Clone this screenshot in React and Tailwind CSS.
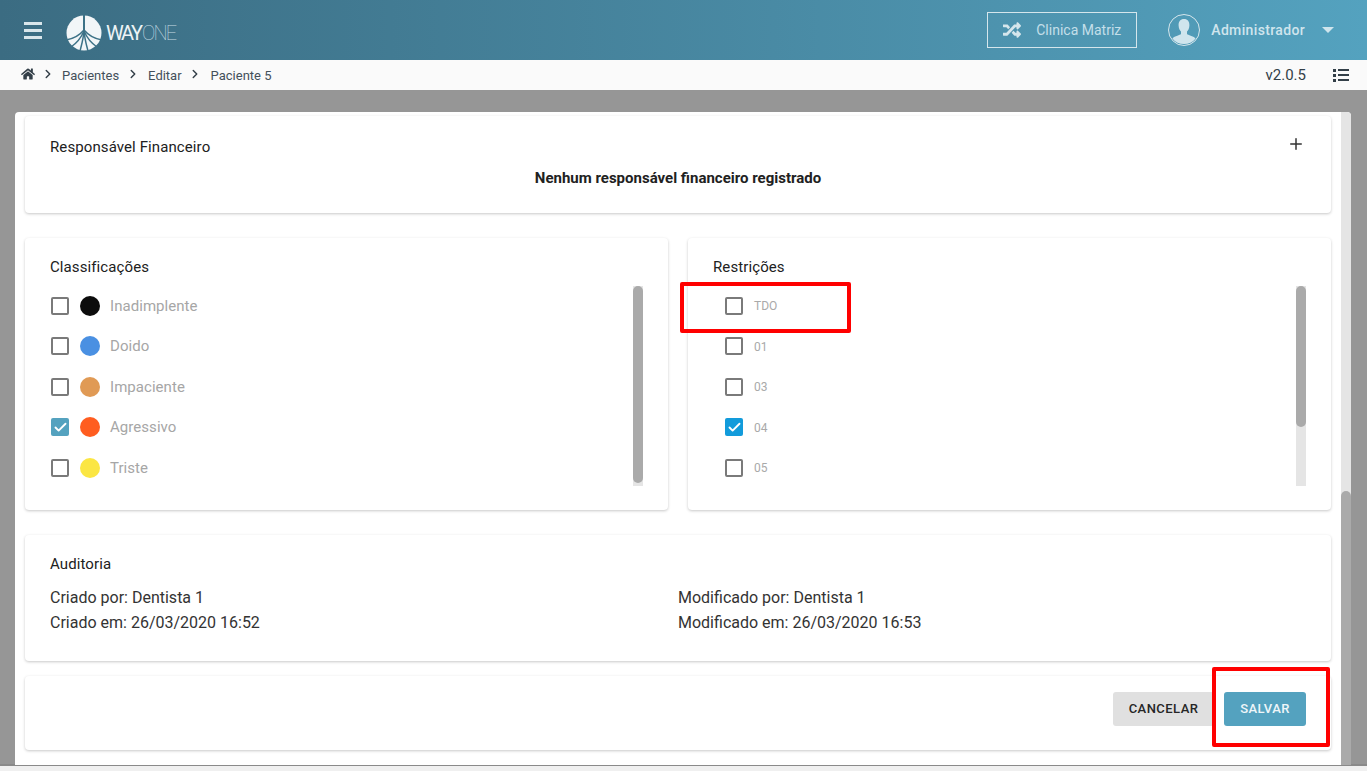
import React from "react";
import { Plus, ChevronRight, Check } from "lucide-react";
import { FaHome, FaRandom } from "react-icons/fa";

const classificacoes = [
  { label: "Inadimplente", color: "bg-[#0c0c0c]" },
  { label: "Doido", color: "bg-[#4a90e2]" },
  { label: "Impaciente", color: "bg-[#e09a55]" },
  { label: "Agressivo", color: "bg-[#ff5d20]", checked: true },
  { label: "Triste", color: "bg-[#fbe643]" },
];

const restricoes = [
  { label: "TDO" },
  { label: "01" },
  { label: "03" },
  { label: "04", checked: true },
  { label: "05" },
];

function Logo() {
  return (
    <svg width="36" height="36" viewBox="0 0 36 36">
      <circle cx="18" cy="18" r="17.5" fill="#f2f6f8" />
      <path d="M18 0V17" stroke="#3d7287" strokeWidth="2" fill="none" />
      <path d="M18 15C17.500 24 15.500 30 14 36M18 15C18.500 24 20.500 30 22 36" stroke="#3d7287" strokeWidth="1.500" fill="none" />
      <path d="M18 16C14.500 24 9.500 29 5 32M18 16C21.500 24 26.500 29 31 32" stroke="#3d7287" strokeWidth="1.500" fill="none" />
      <path d="M18 15C13 21 6 24 0 25M18 15C23 21 30 24 36 25" stroke="#3d7287" strokeWidth="1.500" fill="none" />
    </svg>
  );
}

function Checkbox({ checked, color }) {
  if (checked) {
    return (
      <span className={`flex h-[18px] w-[18px] items-center justify-center rounded-[2px] ${color}`}>
        <Check size={15} strokeWidth={3} className="text-white" />
      </span>
    );
  }
  return <span className="h-[18px] w-[18px] rounded-[2px] border-2 border-[#7a7a7a] bg-white" />;
}

function Scrollbar({ thumb }) {
  return (
    <div className="absolute right-[25px] top-[48px] h-[200px] w-[10px] bg-[#e5e5e5]">
      <div className={`w-[10px] rounded-full bg-[#aaaaaa] ${thumb}`} />
    </div>
  );
}

function Card({ className = "", children }) {
  return (
    <div className={`rounded-[4px] bg-white shadow-[0_1px_3px_rgba(0,0,0,0.22)] ${className}`}>
      {children}
    </div>
  );
}

export default function App() {
  return (
    <div className="relative flex h-[771px] w-[1367px] flex-col overflow-hidden bg-[#f0f0f0] font-['Roboto',sans-serif] text-[#212121]">
      <header className="flex h-[60px] shrink-0 items-center bg-gradient-to-r from-[#3b6c82] to-[#54a2bf]">
        <div className="ml-6 flex w-[18px] flex-col gap-[4px]">
          <span className="h-[3px] bg-[#d9e6eb]" />
          <span className="h-[3px] bg-[#d9e6eb]" />
          <span className="h-[3px] bg-[#d9e6eb]" />
        </div>
        <div className="ml-[24px] mt-[6px] flex items-center">
          <Logo />
          <span className="ml-[4px] text-[20px] font-normal tracking-[-2.2px] text-[#eef4f6]">WAY</span>
          <span className="ml-[1px] text-[20px] font-thin tracking-[-1.8px] text-[#c5dbe3]">ONE</span>
        </div>
        <div className="ml-auto flex h-[36px] w-[150px] items-center border border-[#d5e6ec] pl-[15px]">
          <FaRandom size={18} className="text-[#d5e6ec]" />
          <span className="ml-[15px] text-[14px] text-[#c4dfe9]">Clinica Matriz</span>
        </div>
        <div className="ml-[31px] flex h-[32px] w-[32px] items-center justify-center overflow-hidden rounded-full border border-[#d5e6ec]">
          <svg width="30" height="30" viewBox="0 0 30 30">
            <path d="M15 4c3.600 0 5.600 2.600 5.400 6.400-.1 2.600-1.200 5-2.400 6.200v2.400c1 1.200 6 2 8.600 4.400C23.800 27 19.600 29 15 29S6.200 27 3.400 23.400C6 21 11 20.200 12 19v-2.400c-1.200-1.200-2.300-3.600-2.400-6.200C9.400 6.600 11.400 4 15 4z" fill="#d0e5ed" />
          </svg>
        </div>
        <span className="ml-[11px] text-[14px] font-medium tracking-[0.35px] text-[#d0e5ed]">Administrador</span>
        <span className="ml-[17px] mr-[33px] h-0 w-0 border-x-[6px] border-t-[6px] border-x-transparent border-t-[#d0e5ed]" />
      </header>

      <nav className="flex h-[30px] shrink-0 items-center bg-[#fafafa] pt-[1px] text-[13px] text-[#44505a]">
        <FaHome size={14} className="ml-[21px] -mt-[4px] text-[#333f48]" />
        <ChevronRight size={14} strokeWidth={2.5} className="ml-[6px] -mt-[3px] text-[#333f48]" />
        <span className="ml-[7px]">Pacientes</span>
        <ChevronRight size={14} strokeWidth={2.5} className="ml-[7px] -mt-[3px] text-[#333f48]" />
        <span className="ml-[8px]">Editar</span>
        <ChevronRight size={14} strokeWidth={2.5} className="ml-[6px] -mt-[3px] text-[#333f48]" />
        <span className="ml-[9px]">Paciente 5</span>
        <span className="ml-auto -mt-[1px] text-[15px] text-[#333f48]">v2.0.5</span>
        <div className="ml-[27px] mr-[18px] -mt-[1px] grid w-[16px] grid-cols-[3px_1fr] gap-x-[2px] gap-y-[2px]">
          <span className="h-[3px] bg-[#333f48]" />
          <span className="h-[2px] bg-[#333f48]" />
          <span className="h-[3px] bg-[#333f48]" />
          <span className="h-[2px] bg-[#333f48]" />
          <span className="h-[3px] bg-[#333f48]" />
          <span className="h-[2px] bg-[#333f48]" />
        </div>
      </nav>

      <main className="flex h-[676px] shrink-0 border-b-2 border-[#8a8a8a] bg-[#969696] pl-[15px] pr-[16px] pt-[22px]">
        <div className="flex h-[653px] w-[1336px] overflow-hidden rounded-tl-[4px] rounded-tr-[4px] bg-white">
          <div className="w-[1326px] pl-[10px] pr-[10px]">
            <Card className="relative mt-[4px] h-[97px] px-[25px]">
              <h3 className="pt-[23px] text-[15px] leading-[16px] tracking-[0.1px]">Responsável Financeiro</h3>
              <Plus size={18} strokeWidth={2} className="absolute right-[26px] top-[19px] text-[#333]" />
              <p className="mt-[15px] text-center text-[15px] font-bold leading-[16px]">
                Nenhum responsável financeiro registrado
              </p>
            </Card>

            <div className="mt-[25px] grid grid-cols-2 gap-[20px]">
              <Card className="relative h-[272px] pl-[25px]">
                <h3 className="pt-[21px] text-[15px] leading-[16px] tracking-[0.1px]">Classificações</h3>
                <ul className="mt-[10.600px]">
                  {classificacoes.map((item) => (
                    <li key={item.label} className="flex h-[40.500px] items-center pl-[1px]">
                      <Checkbox checked={item.checked} color="bg-[#54a2bf]" />
                      <span className={`ml-[11px] h-5 w-5 rounded-full ${item.color}`} />
                      <span className="ml-[10px] text-[15px] tracking-[0.05px] text-[#a6a6a6]">{item.label}</span>
                    </li>
                  ))}
                </ul>
                <Scrollbar thumb="h-[197px]" />
              </Card>

              <Card className="relative h-[272px] pl-[25px]">
                <h3 className="pt-[21px] text-[15px] leading-[16px] tracking-[0.1px]">Restrições</h3>
                <ul className="mt-[10.600px]">
                  {restricoes.map((item) => (
                    <li key={item.label} className="flex h-[40.500px] items-center pl-[12px]">
                      <Checkbox checked={item.checked} color="bg-[#129bdb]" />
                      <span className="ml-[11px] pt-[1px] text-[12px] text-[#a9a9a9]">{item.label}</span>
                    </li>
                  ))}
                </ul>
                <Scrollbar thumb="h-[141px]" />
              </Card>
            </div>

            <Card className="mt-[25px] h-[126px] px-[25px]">
              <h3 className="pt-[21px] text-[15px] leading-[16px] tracking-[0.1px]">Auditoria</h3>
              <div className="mt-[16px] grid grid-cols-[628px_1fr] gap-y-[5px] text-[16px] leading-[20px] text-[#333]">
                <span>Criado por: Dentista 1</span>
                <span>Modificado por: Dentista 1</span>
                <span>Criado em: 26/03/2020 16:52</span>
                <span>Modificado em: 26/03/2020 16:53</span>
              </div>
            </Card>

            <Card className="mt-[15px] flex h-[74px] items-start justify-end pr-[25px] pt-[16px]">
              <button className="h-[34px] w-[101px] rounded-[3px] bg-[#e0e0e0] text-[13px] font-medium tracking-[0.45px] text-[#262626]">
                CANCELAR
              </button>
              <button className="ml-[10px] h-[34px] w-[82px] rounded-[3px] bg-[#54a2bf] text-[13px] font-medium tracking-[0.45px] text-[#eef6f9]">
                SALVAR
              </button>
            </Card>
          </div>
          <div className="flex w-[10px] flex-col justify-end bg-[#e5e5e5]">
            <div className="h-[274px] rounded-t-full bg-[#aaaaaa]" />
          </div>
        </div>
      </main>

      <div className="absolute left-[680px] top-[282px] h-[51px] w-[171px] rounded-[2px] border-[4px] border-[#ff0000]" />
      <div className="absolute left-[1212px] top-[667px] h-[80px] w-[118px] rounded-[2px] border-[4px] border-[#ff0000]" />
    </div>
  );
}
